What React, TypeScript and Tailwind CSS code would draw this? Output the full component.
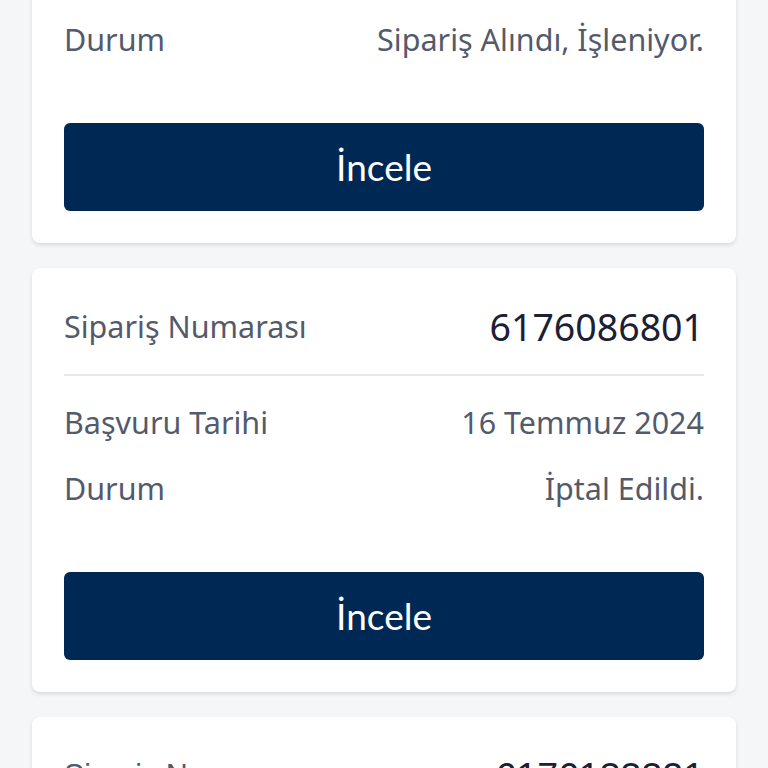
import React from "react";

type Order = { no: string; date: string; status: string };

function Card({ o, font }: { o: Order; font?: string }) {
  return (
    <div className="bg-white rounded-[8px] shadow-[0_2px_4px_rgba(0,0,0,0.12)] px-8 pt-8 pb-8" style={font ? { fontFamily: font } : undefined}>
      <div className="h-[54px] flex items-center justify-between">
        <span className="text-[30.5px] text-[#535a6b]">Sipariş Numarası</span>
        <span className="text-[37.5px] text-[#1b2034]">{o.no}</span>
      </div>
      <div className="mt-[20px] h-[2px] bg-[#e6e8eb]" />
      <div className="mt-[27px] h-[40px] flex items-center justify-between">
        <span className="text-[30.5px] text-[#535a6b]">Başvuru Tarihi</span>
        <span className="text-[30.5px] text-[#535a6b]">{o.date}</span>
      </div>
      <div className="mt-[26px] h-[40px] flex items-center justify-between">
        <span className="text-[30.5px] text-[#535a6b]">Durum</span>
        <span className="text-[30.5px] text-[#535a6b]">{o.status}</span>
      </div>
      <button className="mt-[63px] w-full h-[88px] rounded-[6px] bg-[#002855] text-white text-[37px] flex items-center justify-center" style={{ fontFamily: "Lato, sans-serif" }}>
        İncele
      </button>
    </div>
  );
}

export default function App() {
  const orders: Order[] = [
    { no: "6176091205", date: "17 Temmuz 2024", status: "Sipariş Alındı, İşleniyor." },
    { no: "6176086801", date: "16 Temmuz 2024", status: "İptal Edildi." },
    { no: "6176133321", date: "15 Temmuz 2024", status: "Teslim Edildi." },
  ];
  return (
    <div className="h-[768px] overflow-hidden bg-[#f5f6f8] px-8" style={{ fontFamily: "'Noto Sans', sans-serif" }}>
      <div className="mt-[-181px] flex flex-col gap-[25px]">
        <Card o={orders[0]} />
        <Card o={orders[1]} />
        <Card o={orders[2]} font="'Liberation Sans', Arial, sans-serif" />
      </div>
    </div>
  );
}
